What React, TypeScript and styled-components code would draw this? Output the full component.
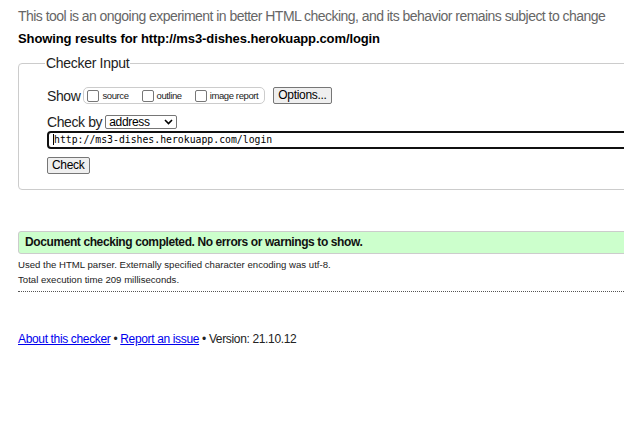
import React from "react";
import styled, { createGlobalStyle } from "styled-components";

const GlobalStyle = createGlobalStyle`
	html, body {
		margin: 0;
		padding: 0;
		background: #fff;
		overflow: hidden;
	}
	body {
		font-family: "Liberation Sans", Arial, sans-serif;
		color: #111;
	}
`;

const Page = styled.div`
	width: 1000px;
	padding: 0 18px;
`;

const Intro = styled.p`
	margin: 0;
	padding-top: 8px;
	height: 16px;
	line-height: 16px;
	font-size: 14px;
	letter-spacing: -0.54px;
	color: #666;
`;

const Heading = styled.h2`
	margin: 7px 0 0;
	height: 16px;
	line-height: 16px;
	font-size: 13px;
	letter-spacing: -0.1px;
	font-weight: bold;
	color: #000;
`;

const Fieldset = styled.fieldset`
	margin: 8px 0 0;
	padding: 12px 28px 15px;
	border: 1px solid #ccc;
	border-radius: 4px;
`;

const Legend = styled.legend`
	margin-left: -2px;
	padding: 0 1px;
	font-size: 14px;
	letter-spacing: -0.3px;
	line-height: 16px;
	color: #222;
`;

const Row = styled.div`
	display: flex;
	align-items: center;
	height: 17px;
	margin-top: ${(p: { $top: number }) => p.$top}px;
	font-size: 14px;
	letter-spacing: -0.4px;
	color: #222;
`;

const Group = styled.span`
	display: inline-flex;
	align-items: center;
	gap: 13px;
	margin-left: 3px;
	height: 15px;
	padding: 0 6px 0 3px;
	border: 1px solid #ccc;
	border-radius: 5px;
`;

const CheckLabel = styled.label`
	display: inline-flex;
	align-items: center;
	font-size: 9.5px;
	color: #222;
`;

const Box = styled.span`
	display: inline-block;
	width: 10px;
	height: 10px;
	margin-right: 3px;
	border: 1px solid #777;
	border-radius: 2px;
	background: #fff;
`;

const Button = styled.button`
	font-family: "Liberation Sans", Arial, sans-serif;
	font-size: 12px;
	letter-spacing: -0.3px;
	height: 17px;
	padding: 0 4px;
	line-height: 15px;
	color: #000;
	background: #efefef;
	border: 1px solid #767676;
	border-radius: 2px;
	margin-left: ${(p: { $left?: number }) => p.$left ?? 0}px;
`;

const Select = styled.span`
	display: inline-flex;
	align-items: center;
	justify-content: space-between;
	margin-left: 3px;
	width: 64px;
	height: 12px;
	padding: 0 3px 0 3px;
	border: 1px solid #767676;
	border-radius: 2px;
	font-size: 12px;
	letter-spacing: -0.3px;
	line-height: 12px;
	color: #000;
`;

const UrlInput = styled.div`
	margin-top: 1px;
	height: 14px;
	padding: 0 4px;
	border: 2px solid #101010;
	border-radius: 4px;
	font-family: "DejaVu Sans Mono", "Liberation Mono", monospace;
	font-size: 9.8px;
	line-height: 14px;
	color: #000;
`;

const Caret = styled.span`
	display: inline-block;
	width: 1px;
	height: 11px;
	vertical-align: -2px;
	background: #000;
`;

const ButtonRow = styled.div`
	margin-top: 6px;
`;

const Success = styled.div`
	margin-top: 41px;
	height: 21px;
	padding: 0 6px;
	line-height: 21px;
	font-size: 12px;
	letter-spacing: -0.4px;
	font-weight: bold;
	color: #111;
	background: #ccffcc;
	border: 1px solid #ccc;
	border-radius: 3px;
`;

const Detail = styled.p`
	margin: ${(p: { $top: number }) => p.$top}px 0 0;
	height: 12px;
	line-height: 12px;
	font-size: 9.6px;
	color: #222;
	width: 606px;
`;

const Rule = styled.hr`
	margin: 5px 0 0;
	width: 606px;
	border: 0;
	border-top: 1px dotted #555;
`;

const Footer = styled.p`
	margin: 40px 0 0;
	font-size: 12px;
	letter-spacing: -0.35px;
	line-height: 14px;
	color: #222;
`;

const FooterLink = styled.a`
	color: #0000ee;
	text-decoration: underline;
`;

const Chevron = () => (
	<svg width="9" height="6" viewBox="0 0 9 6">
		<path d="M1 1 L4.5 4.5 L8 1" fill="none" stroke="#000" strokeWidth="1.6" />
	</svg>
);

const options = ["source", "outline", "image report"];

const App = () => {
	return (
		<Page>
			<GlobalStyle />
			<Intro>
				This tool is an ongoing experiment in better HTML checking, and its
				behavior remains subject to change
			</Intro>
			<Heading>Showing results for http://ms3-dishes.herokuapp.com/login</Heading>
			<Fieldset>
				<Legend>Checker Input</Legend>
				<Row $top={4}>
					Show
					<Group>
						{options.map((o) => (
							<CheckLabel key={o}>
								<Box />
								{o}
							</CheckLabel>
						))}
					</Group>
					<Button $left={8}>Options...</Button>
				</Row>
				<Row $top={9}>
					Check by
					<Select>
						address
						<Chevron />
					</Select>
				</Row>
				<UrlInput>
					<Caret />
					http://ms3-dishes.herokuapp.com/login
				</UrlInput>
				<ButtonRow>
					<Button>Check</Button>
				</ButtonRow>
			</Fieldset>
			<Success>Document checking completed. No errors or warnings to show.</Success>
			<Detail $top={5}>
				Used the HTML parser. Externally specified character encoding was utf-8.
			</Detail>
			<Detail $top={3}>Total execution time 209 milliseconds.</Detail>
			<Rule />
			<Footer>
				<FooterLink href="#">About this checker</FooterLink> •{" "}
				<FooterLink href="#">Report an issue</FooterLink> • Version: 21.10.12
			</Footer>
		</Page>
	);
};

export default App;
